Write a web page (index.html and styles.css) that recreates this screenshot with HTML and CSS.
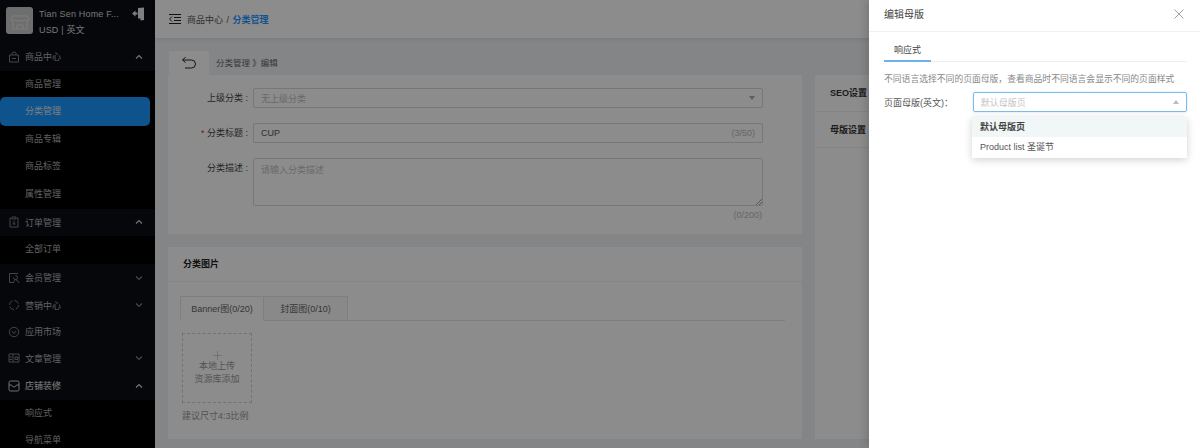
FILE: index.html
```html
<!DOCTYPE html>
<html lang="zh">
<head>
    <meta charset="utf-8">
    <title>编辑母版</title>
    <link rel="stylesheet" href="styles.css">
</head>
<body>
    <div class="app">
        <!-- Sidebar -->
        <aside class="sidebar">
            <div class="account">
                <div class="shop-logo">
                    <svg viewBox="0 0 26 26" width="26" height="26" fill="none" stroke="#e6e6e6" stroke-width="1">
                        <path d="M6,8 L20,8 L22,12 Q20,14 17.5,12 Q15,14 13,12 Q11,14 8.5,12 Q6,14 4,12 Z"/>
                        <path d="M6,14 L6,21 L20,21 L20,14 M10,21 L10,17 L16,17 L16,21"/>
                    </svg>
                </div>
                <div class="shop-info">
                    <div>Tian Sen Home F...</div>
                    <div>USD | 英文</div>
                </div>
                <svg class="exit" viewBox="0 0 14 14" width="14" height="14">
                    <path d="M7,1 L13,0.5 L13,13 L9.5,13.5 L9.5,11.5 L7,11.5 Z" fill="#e8e8e8"/>
                    <path d="M1,6.5 L4.5,3.5 L4.5,5.5 L6.5,5.5 L6.5,7.5 L4.5,7.5 L4.5,9.5 Z" fill="#e8e8e8"/>
                </svg>
            </div>

            <div class="menu-row open">
                <svg class="menu-icon" viewBox="0 0 12 12"><path d="M1.5,4 H10.5 V11 H1.5 Z M4,4 V2.5 Q4,1 6,1 Q8,1 8,2.5 V4 M4,7.5 H8"/></svg>
                <span>商品中心</span>
                <svg class="arrow" viewBox="0 0 8 8"><path d="M1,5.5 L4,2.5 L7,5.5"/></svg>
            </div>
            <div class="submenu">
                <div class="sub-row">商品管理</div>
                <div class="sub-row active">分类管理</div>
                <div class="sub-row">商品专辑</div>
                <div class="sub-row">商品标签</div>
                <div class="sub-row">属性管理</div>
            </div>

            <div class="menu-row open">
                <svg class="menu-icon" viewBox="0 0 12 12"><path d="M3,2 H2 V11 H10 V2 H9 M4,1 H8 V3 H4 Z M6,5 V8 M4.5,8 H7.5"/></svg>
                <span>订单管理</span>
                <svg class="arrow" viewBox="0 0 8 8"><path d="M1,5.5 L4,2.5 L7,5.5"/></svg>
            </div>
            <div class="submenu">
                <div class="sub-row">全部订单</div>
            </div>

            <div class="menu-row">
                <svg class="menu-icon" viewBox="0 0 12 12"><path d="M10,1.5 H1.5 V10.5 H5 M7.5,3.5 Q9.5,3.5 9.5,5.5 Q9.5,7.5 7.5,7.5 Q5.5,7.5 5.5,5.5 M5.5,11 Q6,8 7.5,7.5 Q9.5,8 11,11"/></svg>
                <span>会员管理</span>
                <svg class="arrow" viewBox="0 0 8 8"><path d="M1,2.5 L4,5.5 L7,2.5"/></svg>
            </div>
            <div class="menu-row">
                <svg class="menu-icon" viewBox="0 0 12 12"><circle cx="6" cy="6" r="4.5" stroke-dasharray="5 2"/></svg>
                <span>营销中心</span>
                <svg class="arrow" viewBox="0 0 8 8"><path d="M1,2.5 L4,5.5 L7,2.5"/></svg>
            </div>
            <div class="menu-row short">
                <svg class="menu-icon" viewBox="0 0 12 12"><circle cx="6" cy="6" r="4.7"/><path d="M4,5 L6,7.5 L8,5"/></svg>
                <span>应用市场</span>
            </div>
            <div class="menu-row">
                <svg class="menu-icon" viewBox="0 0 12 12"><path d="M1,2 H11 V10 H1 Z M5,2 V10 M1.5,5 H4 M1.5,7.5 H4 M7,5 H9.5 V7.5 H7 Z"/></svg>
                <span>文章管理</span>
                <svg class="arrow" viewBox="0 0 8 8"><path d="M1,2.5 L4,5.5 L7,2.5"/></svg>
            </div>
            <div class="menu-row open">
                <svg class="menu-icon bright" viewBox="0 0 12 12"><path d="M2.5,1 H9.5 Q11,1 11,2.5 V9.5 Q11,11 9.5,11 H2.5 Q1,11 1,9.5 V2.5 Q1,1 2.5,1 Z M1,5 H3.5 Q4.5,7 6,7 Q7.5,7 8.5,5 H11"/></svg>
                <span class="bright-text">店铺装修</span>
                <svg class="arrow" viewBox="0 0 8 8"><path d="M1,5.5 L4,2.5 L7,5.5"/></svg>
            </div>
            <div class="submenu">
                <div class="sub-row">响应式</div>
                <div class="sub-row">导航菜单</div>
            </div>
        </aside>

        <div class="main">
            <!-- Top bar -->
            <header class="topbar">
                <svg class="fold" viewBox="0 0 12 12" width="12" height="12">
                    <path d="M0,1.5 H12 M5,4.5 H12 M5,7.5 H12 M0,10.5 H12 M3,3.5 L0.5,6 L3,8.5"/>
                </svg>
                <span class="crumb">商品中心 / <b>分类管理</b></span>
            </header>

            <div class="content">
                <div class="left-col">
                    <div class="back-row">
                        <div class="back-tab">
                            <svg viewBox="0 0 16 14" width="16" height="14"><path d="M4.5,1 L1.5,4 L4.5,6.5 M1.5,4 H10.5 Q14.5,4 14.5,8 Q14.5,12 10.5,12 H4"/></svg>
                        </div>
                        <span class="back-path">分类管理 》编辑</span>
                    </div>

                    <section class="card form-card">
                        <div class="field">
                            <label>上级分类 :</label>
                            <div class="input muted">无上级分类<i class="caret"></i></div>
                        </div>
                        <div class="field">
                            <label><em>*</em> 分类标题 :</label>
                            <div class="input">CUP<small>(3/50)</small></div>
                        </div>
                        <div class="field">
                            <label>分类描述 :</label>
                            <div class="input textarea muted">请输入分类描述
                                <svg class="grip" viewBox="0 0 6 6" width="6" height="6"><path d="M0,6 L6,0 M3,6 L6,3"/></svg>
                            </div>
                        </div>
                        <div class="count">(0/200)</div>
                    </section>

                    <section class="card image-card">
                        <h3>分类图片</h3>
                        <div class="image-body">
                            <div class="tabs">
                                <div class="tab current">Banner图(0/20)</div>
                                <div class="tab">封面图(0/10)</div>
                            </div>
                            <div class="upload">
                                <svg viewBox="0 0 9 9" width="9" height="9"><path d="M4.5,0 V9 M0,4.5 H9"/></svg>
                                <span>本地上传</span>
                                <span>资源库添加</span>
                            </div>
                            <p class="hint">建议尺寸4:3比例</p>
                        </div>
                    </section>
                </div>

                <aside class="card side-card">
                    <div class="side-row">SEO设置</div>
                    <div class="side-row">母版设置</div>
                </aside>
            </div>
        </div>

        <div class="mask"></div>

        <!-- Drawer -->
        <div class="drawer">
            <div class="drawer-head">
                <span>编辑母版</span>
                <svg viewBox="0 0 10 10" width="10" height="10"><path d="M0.5,0.5 L9.5,9.5 M9.5,0.5 L0.5,9.5"/></svg>
            </div>
            <div class="drawer-body">
                <div class="drawer-tabs"><span>响应式</span></div>
                <p class="drawer-note">不同语言选择不同的页面母版，查看商品时不同语言会显示不同的页面样式</p>
                <div class="drawer-field">
                    <label>页面母版(英文)：</label>
                    <div class="select-box">默认母版页<i class="caret up"></i></div>
                </div>
            </div>
            <ul class="dropdown">
                <li class="selected">默认母版页</li>
                <li>Product list 圣诞节</li>
            </ul>
        </div>
    </div>
</body>
</html>
```

FILE: styles.css
```css
* {
    box-sizing: border-box;
}
html, body {
    margin: 0;
    height: 100%;
    overflow: hidden;
}
body {
    font-family: "Liberation Sans", "Noto Sans CJK SC", sans-serif;
    font-size: 9px;
    color: #333;
}
.app {
    position: relative;
    display: flex;
    width: 1200px;
    height: 448px;
    overflow: hidden;
    background: #f0f2f5;
}

/* Sidebar */
.sidebar {
    flex: 0 0 155px;
    height: 448px;
    overflow: hidden;
    background: #0a0d14;
    color: #b0b1b3;
}
.account {
    display: flex;
    height: 43px;
    padding: 7px 0 0 6px;
}
.shop-logo {
    display: flex;
    justify-content: center;
    align-items: center;
    width: 27px;
    height: 27px;
    border-radius: 3px;
    background: #c9c9c9;
}
.shop-info {
    width: 92px;
    margin-left: 6px;
    line-height: 15.5px;
    letter-spacing: 0.02em;
    color: #d8d8d8;
    white-space: nowrap;
}
.menu-row {
    display: flex;
    align-items: center;
    height: 27.6px;
    padding: 0 12px 0 8px;
}
.menu-row.short {
    height: 25.6px;
}
.menu-row span {
    flex: 1;
    margin-left: 5px;
}
.menu-icon {
    width: 12px;
    height: 12px;
    fill: none;
    stroke: #8a8b8d;
    stroke-width: 0.9;
}
.menu-icon.bright {
    stroke: #e4e4e4;
}
.bright-text {
    color: #e8e8e8;
}
.menu-row.open .arrow path {
    stroke: #d8d8d8;
}
.arrow {
    width: 8px;
    height: 8px;
    fill: none;
    stroke: #84868a;
    stroke-width: 1.1;
}
.submenu {
    background: #000;
}
.sub-row {
    height: 27.6px;
    padding-left: 25px;
    line-height: 27.6px;
}
.sub-row.active {
    height: 28.6px;
    margin: -1px 5px 0 0;
    border-radius: 5px;
    background: #1a98ff;
    line-height: 29px;
    color: #e4e4e4;
}

/* Main area */
.main {
    flex: 1;
    display: flex;
    flex-direction: column;
    min-width: 0;
}
.topbar {
    display: flex;
    align-items: center;
    flex: 0 0 38px;
    padding-left: 14px;
    background: #fff;
    box-shadow: 0 1px 4px rgba(0, 21, 41, .1);
}
.fold {
    fill: none;
    stroke: #222;
    stroke-width: 1;
}
.crumb {
    margin-left: 6px;
    word-spacing: 1px;
    color: #555;
}
.crumb b {
    color: #1a98ff;
}
.content {
    display: flex;
    gap: 13px;
    padding: 12px 0 0 13px;
}
.left-col {
    flex: 0 0 634px;
}
.back-row {
    display: flex;
    align-items: center;
    height: 25px;
}
.back-tab {
    display: flex;
    justify-content: center;
    align-items: center;
    width: 42px;
    height: 25px;
    border: 1px solid #f2f2f2;
    border-bottom: 0;
    background: #fff;
}
.back-tab svg {
    fill: none;
    stroke: #222;
    stroke-width: 1;
}
.back-path {
    margin: -1px 0 0 6px;
    font-size: 8.5px;
    color: #666;
}
.card {
    background: #fff;
}

/* Form card */
.form-card {
    height: 159px;
    padding-top: 13px;
}
.field {
    display: flex;
    margin-bottom: 15px;
}
.field label {
    width: 85px;
    padding-right: 5px;
    line-height: 20px;
    text-align: right;
    color: #444;
}
.field em {
    font-style: normal;
    color: #f5222d;
}
.input {
    position: relative;
    display: flex;
    align-items: center;
    justify-content: space-between;
    width: 510px;
    height: 20px;
    padding: 0 7px;
    border: 1px solid #d9d9d9;
    border-radius: 2px;
    color: #555;
}
.input small {
    font-size: 9px;
    color: #bbb;
}
.muted {
    color: #bfbfbf;
}
.textarea {
    align-items: flex-start;
    height: 48px;
    padding-top: 4px;
}
.grip {
    position: absolute;
    right: 0;
    bottom: 0;
    fill: none;
    stroke: #777;
    stroke-width: 0.7;
}
.caret {
    width: 0;
    height: 0;
    border: 3.5px solid transparent;
    border-top: 4px solid #aaa;
    border-bottom: 0;
}
.caret.up {
    border-top: 0;
    border-bottom: 4px solid #bbb;
}
.count {
    margin: -11px 0 0 0;
    padding-right: 40px;
    text-align: right;
    color: #bbb;
}

/* Image card */
.image-card {
    height: 192px;
    margin-top: 13px;
}
.image-card h3 {
    height: 35px;
    margin: 0;
    padding-left: 15px;
    border-bottom: 1px solid #f0f0f0;
    font-size: 9px;
    line-height: 35px;
    color: #222;
}
.image-body {
    padding: 14px 0 0 12px;
}
.tabs {
    display: flex;
    height: 25px;
    border-bottom: 1px solid #e8e8e8;
    margin-right: 17px;
}
.tab {
    width: 84px;
    height: 25px;
    border: 1px solid #e8e8e8;
    background: #fafafa;
    line-height: 24px;
    text-align: center;
    color: #666;
}
.tab.current {
    background: #fff;
    border-bottom-color: #fff;
}
.tab + .tab {
    width: 84px;
    border-left: 0;
}
.upload {
    display: flex;
    flex-direction: column;
    align-items: center;
    justify-content: center;
    width: 70px;
    height: 70px;
    margin: 12px 0 0 2px;
    border: 1px dashed #d0d0d0;
    line-height: 13px;
    color: #999;
}
.upload svg {
    margin: 1px 0 0;
    fill: none;
    stroke: #c4c4c4;
    stroke-width: 0.8;
}
.hint {
    margin: 6px 0 0 2px;
    color: #999;
}

/* Right column */
.side-card {
    flex: 1;
    height: 364px;
    margin-top: 25px;
}
.side-row {
    height: 36.5px;
    padding-left: 15px;
    border-bottom: 1px solid #f0f0f0;
    font-weight: 700;
    line-height: 36px;
    color: #333;
    white-space: nowrap;
}

/* Mask + drawer */
.mask {
    position: absolute;
    inset: 0;
    background: rgba(0, 0, 0, .45);
}
.drawer {
    position: absolute;
    top: 0;
    right: 0;
    bottom: 0;
    width: 331px;
    background: #fff;
    box-shadow: -3px 0 8px rgba(0, 0, 0, .15);
}
.drawer-head {
    display: flex;
    justify-content: space-between;
    align-items: center;
    height: 32px;
    padding: 0 16px 4px 15px;
    border-bottom: 1px solid #f0f0f0;
    font-size: 10px;
    color: #444;
}
.drawer-head svg {
    fill: none;
    stroke: #888;
    stroke-width: 0.8;
}
.drawer-body {
    padding: 7px 13px 0 15px;
}
.drawer-tabs {
    height: 23px;
    border-bottom: 1px solid #eee;
}
.drawer-tabs span {
    display: inline-block;
    width: 47px;
    height: 23px;
    border-bottom: 2px solid #6eb4ea;
    line-height: 22px;
    text-align: center;
    color: #444;
}
.drawer-note {
    margin: 11px 0 0;
    font-size: 8.8px;
    line-height: 13px;
    color: #888;
    white-space: nowrap;
}
.drawer-field {
    display: flex;
    align-items: center;
    margin-top: 6px;
}
.drawer-field label {
    width: 89px;
    color: #555;
}
.select-box {
    display: flex;
    justify-content: space-between;
    align-items: center;
    width: 215px;
    height: 20px;
    padding: 0 7px;
    border: 1px solid #7cbcec;
    border-radius: 2px;
    box-shadow: 0 0 2px rgba(30, 140, 240, .35);
    color: #c4c4c4;
}
.dropdown {
    position: absolute;
    top: 117px;
    left: 103px;
    width: 215px;
    margin: 0;
    padding: 0;
    list-style: none;
    background: #fff;
    box-shadow: 0 2px 8px rgba(0, 0, 0, .18);
    color: #555;
}
.dropdown li {
    height: 21px;
    padding-left: 8px;
    line-height: 20px;
}
.dropdown .selected {
    height: 20px;
    background: #f1f7f6;
    font-weight: 700;
    color: #444;
}
```
